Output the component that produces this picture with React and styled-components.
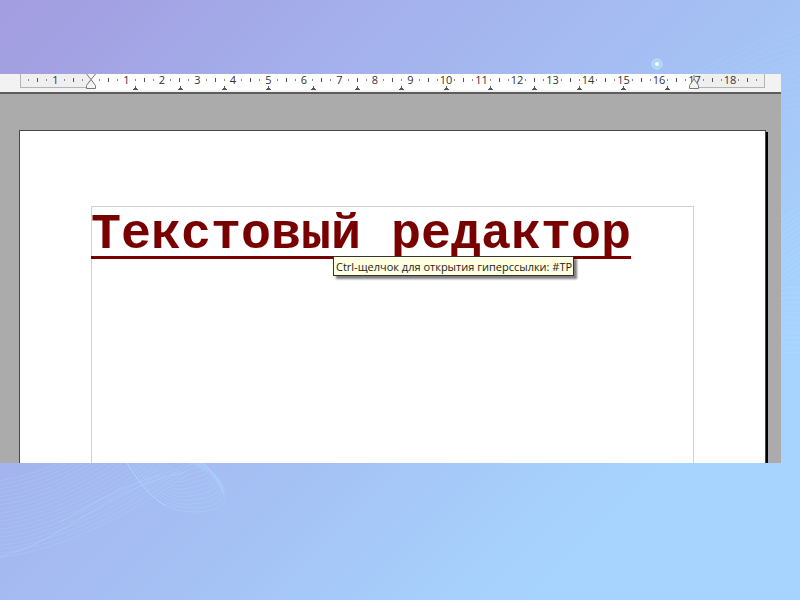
import React from "react";
import styled, { createGlobalStyle } from "styled-components";

const GlobalStyle = createGlobalStyle`
  *, *::before, *::after { box-sizing: border-box; }
  body {
    margin: 0;
    font-family: "Open Sans", "Noto Sans", sans-serif;
  }
`;

const Slide = styled.main`
  position: relative;
  min-height: 100vh;
  padding: 74px 19px 0 0;
  overflow: hidden;
  background: linear-gradient(135deg, #a39ee1 0%, #a3a1e3 8%, #a4afeb 26%, #a5baf1 43%, #a5c3f5 58%, #a6cefb 72%, #a7d4ff 82%);
`;

const Backdrop = styled.svg`
  position: absolute;
  inset: 0;
  width: 100%;
  height: 100%;
  fill: none;
  stroke: #b0dcff;
`;

const Editor = styled.section`
  position: relative;
  background: #ababab;
`;

const RulerBar = styled.div`
  height: 20px;
  padding: 0 16px 0 20px;
  background: #f2f2f2;
  border-bottom: 2px solid #5c5c5c;
`;

const Ruler = styled.div`
  position: relative;
  display: grid;
  grid-template-columns: 2fr 17fr 2fr;
  height: 16px;
`;

const Margin = styled.div`
  height: 14px;
  background: #efefef;
  border: solid #b4b4b4;
  border-width: ${(p) => (p.$side === "left" ? "0 0 1px 1px" : "0 1px 1px 0")};
`;

const TextSpan = styled.div`
  position: relative;
  background: #fff;
`;

const Scale = styled.div`
  position: absolute;
  inset: 0;
  display: flex;
  height: 12px;
  align-items: center;
`;

const HalfStep = styled.span`
  flex: 1 1 0;
`;

const Step = styled.span`
  flex: 2 1 0;
  min-width: 0;
  display: flex;
  justify-content: center;
  font-size: 11px;
  line-height: 12px;
  color: #333;
  white-space: nowrap;
`;

const Mark = styled.i`
  width: 1px;
  height: ${(p) => (p.$tall ? 4 : 2)}px;
  background: ${(p) => (p.$tall ? "#555" : "#888")};
`;

const TabStops = styled.div`
  position: absolute;
  inset: auto 0 0 0;
  display: flex;
  height: 4px;
`;

const TabStop = styled.span`
  flex: 0 0 calc(125% / 17);
  display: flex;
  justify-content: flex-end;
`;

const TabGlyph = styled.svg`
  flex: none;
  width: 5px;
  height: 4px;
  margin-right: -3px;
`;

const Indent = styled.svg`
  position: absolute;
  top: 0;
  ${(p) => p.$side}: -6px;
  width: 12px;
  height: 16px;
  z-index: 1;
  fill: #f4f4f4;
  stroke: #777;
`;

const Workspace = styled.div`
  padding: 36px 15px 0 19px;
  overflow: hidden;
`;

const Page = styled.article`
  min-height: 333px;
  padding: 75px 71px 0;
  display: flex;
  background: #fff;
  border: solid #484848;
  border-width: 1px 1px 0 1px;
  box-shadow: 2px 2px 0 #000;
`;

const TextFrame = styled.div`
  flex: 1;
  min-width: 0;
  padding-top: 3px;
  border: solid #d2d2d2;
  border-width: 1px 1px 0 1px;
`;

const Heading = styled.h1`
  position: relative;
  display: table;
  margin: 0 0 0 -1px;
  font: bold 50px/50px "Liberation Mono", monospace;
  white-space: nowrap;
`;

const Hyperlink = styled.a`
  color: #780000;
  text-decoration: underline 3px;
  text-underline-offset: 8px;
  text-decoration-skip-ink: none;
`;

const Tooltip = styled.span`
  position: absolute;
  top: 46px;
  left: 242px;
  height: 20px;
  padding: 0 1px 0 2px;
  border: 1px solid #333;
  background: #ffffe1;
  box-shadow: 3px 3px 2px rgba(0, 0, 0, 0.5);
  color: #222;
  font: 11px/19px "Open Sans", "Noto Sans", sans-serif;
`;

const range = (n) => Array.from({ length: n }, (_, i) => i);

function Waves() {
  return (
    <Backdrop viewBox="0 0 800 600" preserveAspectRatio="xMidYMid slice" aria-hidden="true">
      <g opacity="0.22">
        {range(16).map((i) => (
          <path key={i} d={`M${670 + i * 4} ${90 + i * 3} Q${735 + i * 2} ${44 + i * 5} 805 ${24 + i * 6}`} />
        ))}
      </g>
      <g opacity="0.5">
        {range(14).map((i) => (
          <path key={i} d={`M770 ${228 + i * 5} Q790 ${212 + i * 5} 805 ${204 + i * 5}`} />
        ))}
        {range(14).map((i) => (
          <path key={i} d={`M770 ${290 + i * 5} Q788 ${286 + i * 5} 805 ${288 + i * 5}`} />
        ))}
      </g>
      <g opacity="0.25">
        {range(20).map((i) => (
          <path key={i} d={`M-5 ${482 + i * 4} Q${40 + i * 2} ${474 + i * 4} ${75 + i * 6} ${455 + i}`} />
        ))}
      </g>
      <path d="M-5 558 C70 540 100 490 185 472 M60 522 C100 500 125 485 160 475" opacity="0.4" />
      <g opacity="0.35">
        {range(13).map((i) => (
          <path
            key={i}
            d={`M${125 + i * 3} 460 C${145 + i * 2} ${490 - i * 2} ${160 + i} ${512 - i * 3} ${195 - i} ${512 - i * 4} S${240 - i * 2} ${492 - i * 2} ${199 - i * 2} 460`}
          />
        ))}
      </g>
      <path d="M125 460 C137 480 150 497 166 506" opacity="0.7" />
      <path d="M199 460 Q218 474 223 493" opacity="0.6" />
      <circle cx="657" cy="64" r="5" fill="#a9d5fa" stroke="#bde5fc" />
      <circle cx="657" cy="64" r="2" fill="#efffff" stroke="none" />
    </Backdrop>
  );
}

function rulerMark(step) {
  if (step === 8) return null;
  if (step % 4 === 0) return Math.abs(step / 4 - 2);
  return <Mark $tall={step % 4 === 2} />;
}

function HorizontalRuler() {
  return (
    <RulerBar>
      <Ruler>
        <Margin $side="left" />
        <TextSpan>
          <TabStops>
            {range(13).map((i) => (
              <TabStop key={i}>
                <TabGlyph viewBox="0 0 5 4">
                  <path d="M2 0h1v2h1v1h1v1H0V3h1V2h1z" fill="#555" />
                </TabGlyph>
              </TabStop>
            ))}
          </TabStops>
          <Indent $side="left" viewBox="0 0 12 16">
            <path d="M1.5 0L6 5.500L10.500 0M6 5.500L1.500 11.500V14.500H10.500V11.500Z" />
          </Indent>
          <Indent $side="right" viewBox="0 0 12 16">
            <path d="M6 1V5L1.500 11.500V14.500H10.500V11.500L6 5" />
          </Indent>
        </TextSpan>
        <Margin $side="right" />
        <Scale>
          <HalfStep />
          {range(83).map((i) => (
            <Step key={i}>{rulerMark(i + 1)}</Step>
          ))}
          <HalfStep />
        </Scale>
      </Ruler>
    </RulerBar>
  );
}

export default function App() {
  return (
    <>
      <GlobalStyle />
      <Slide>
        <Waves />
        <Editor>
          <HorizontalRuler />
          <Workspace>
            <Page>
              <TextFrame>
                <Heading>
                  <Hyperlink href="#TP" aria-describedby="link-tip">Текстовый редактор</Hyperlink>
                  <Tooltip id="link-tip" role="tooltip">
                    Ctrl-щелчок для открытия гиперссылки: #TP
                  </Tooltip>
                </Heading>
              </TextFrame>
            </Page>
          </Workspace>
        </Editor>
      </Slide>
    </>
  );
}
